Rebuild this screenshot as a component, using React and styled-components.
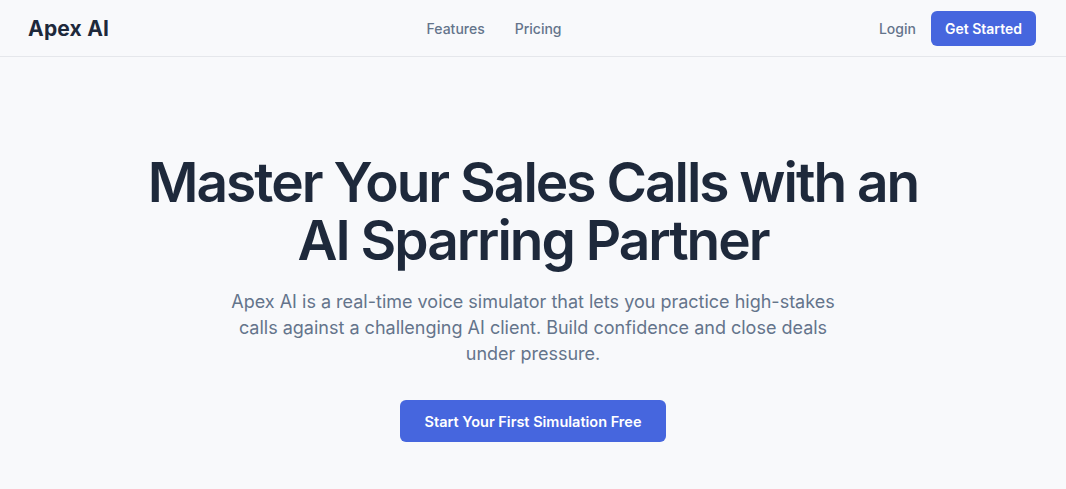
import React from 'react';
import styled, { createGlobalStyle } from 'styled-components';

const Global = createGlobalStyle`
  body {
    margin: 0;
    background: #f8f9fb;
    font-family: Inter, "Noto Sans", sans-serif;
    color: #1e293b;
  }
`;

const Page = styled.div`
  min-height: 489px;
`;

const Nav = styled.header`
  height: 57px;
  box-sizing: border-box;
  border-bottom: 1px solid #e5e7eb;
  display: flex;
  justify-content: space-between;
  align-items: center;
  padding: 0 30px 0 28px;
`;

const Logo = styled.div`
  font-size: 21px;
  font-weight: 700;
  letter-spacing: 0.2px;
  color: #1e293b;
`;

const Links = styled.nav`
  display: flex;
  gap: 30px;
`;

const NavLink = styled.a`
  font-size: 14px;
  color: #64748b;
  font-weight: 500;
  text-decoration: none;
`;

const Right = styled.div`
  display: flex;
  align-items: center;
  gap: 15px;
`;

const Button = styled.button`
  border: none;
  background: #4666de;
  color: #fff;
  font-family: inherit;
  font-weight: 600;
  font-size: ${p => (p.$big ? '14.5px' : '14px')};
  height: ${p => (p.$big ? '42px' : '35px')};
  padding: 0 ${p => (p.$big ? '25px' : '14px')};
  border-radius: 6px;
`;

const Hero = styled.main`
  display: flex;
  flex-direction: column;
  align-items: center;
  text-align: center;
  padding-top: 96px;
`;

const Title = styled.h1`
  margin: 0;
  font-size: 55px;
  line-height: 58px;
  font-weight: 600;
  letter-spacing: -2px;
  color: #1e293b;
  max-width: 820px;
`;

const Lead = styled.p`
  margin: 20px 0 0;
  max-width: 610px;
  font-size: 18px;
  line-height: 26px;
  color: #64748b;
`;

const Cta = styled.div`
  margin-top: 33px;
`;

export default function App() {
  return (
    <Page>
      <Global />
      <Nav>
        <Logo>Apex AI</Logo>
        <Links>
          <NavLink href="#">Features</NavLink>
          <NavLink href="#">Pricing</NavLink>
        </Links>
        <Right>
          <NavLink href="#">Login</NavLink>
          <Button>Get Started</Button>
        </Right>
      </Nav>
      <Hero>
        <Title>Master Your Sales Calls with an AI Sparring Partner</Title>
        <Lead>
          Apex AI is a real-time voice simulator that lets you practice high-stakes calls
          against a challenging AI client. Build confidence and close deals under pressure.
        </Lead>
        <Cta>
          <Button $big>Start Your First Simulation Free</Button>
        </Cta>
      </Hero>
    </Page>
  );
}
